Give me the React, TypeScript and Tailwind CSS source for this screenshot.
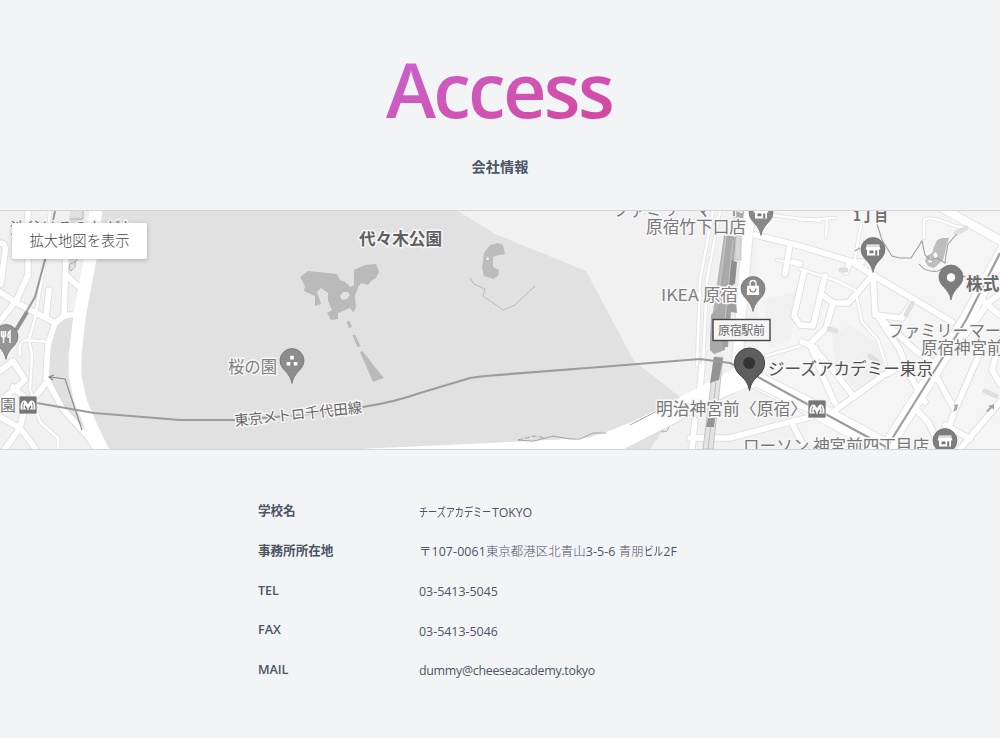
import type { ReactNode } from "react";

type Pt = { x: number; y: number };

const minorRoads = [
  "M0 243 Q6 243 5 252 L1 284",
  "M28 211 L28 275 L17 299",
  "M0 292 L15 302 L55 323 L64 316 L80 313",
  "M0 321 L15 302",
  "M49 290 L46 317",
  "M66 255 L64 316",
  "M66 275 L80 288",
  "M55 323 L48 345 L46 378 L62 408 L88 437 L96 449",
  "M46 383 L24 411 L20 428 L36 449",
  "M0 371 L13 361 L25 380 L0 402",
  "M13 387 L30 402",
  "M0 417 L20 428 L5 449",
  "M755 235 L800 246 L850 261 L873 275 L952 322",
  "M790 244 L785 274",
  "M793 262 L800 264",
  "M804 272 L794 316 L800 325 L813 326 L825 276",
  "M873 275 L848 303 L833 303 L824 296",
  "M862 262 L850 262 L846 272",
  "M873 275 L875 312 L900 350 L908 372 L925 402",
  "M875 315 L902 318 L912 302",
  "M833 303 L826 328 L810 344 L832 369 L854 397",
  "M810 344 L823 377 L835 403",
  "M802 342 L815 348",
  "M834 411 L884 375 L893 371",
  "M880 318 L915 350 L936 365",
  "M914 407 L928 422 L937 440 L947 449",
  "M933 370 L947 396 L955 410",
  "M982 348 L955 410 L948 430",
  "M945 425 L970 439",
  "M1000 402 L960 449",
  "M984 302 L1000 315",
  "M965 335 L989 302 L1000 294",
  "M1000 340 L992 370 L1000 384",
  "M690 438 L730 438 L790 422 L815 416",
  "M792 423 L805 449",
  "M702 365 L699 400",
  "M695 420 L692 449",
];

const thinRoads = [
  "M50 211 L45 260 L35 318 L29 340 L32 355 L30 390",
  "M20 355 Q18 340 27 340 L48 342",
  "M31 392 L40 422 L58 438 L58 449",
  "M713 211 L700 280 L697 365",
  "M720 211 L707 280 L703 365",
  "M800 269 L835 280 L855 290 L862 322 L878 340 L886 365",
  "M800 220 L835 218",
  "M827 218 L826 237",
  "M861 224 L855 258",
  "M924 238 L924 220 Q930 215 955 226 L966 228",
  "M770 215 L820 221",
  "M777 260 L798 265",
  "M766 356 L800 346",
];

function Poi({ x, y, children, fill = "#7d7d7d" }: Pt & { children?: ReactNode; fill?: string }) {
  return (
    <g transform={`translate(${x} ${y})`}>
      <path
        d="M0 22.5 C-1.5 15 -5 12 -9 7.5 A12 12 0 1 1 9 7.5 C5 12 1.5 15 0 22.5Z"
        fill={fill}
        stroke="#6c6c6c"
        strokeWidth=".7"
      />
      {children}
    </g>
  );
}

function Store() {
  return (
    <g>
      <path d="M-6.5 -5.5h13v1.2h-13zM-6.5 -3.7h13l1 3.2h-15z" fill="#fff" />
      <path d="M-6 -1h12v6.5h-12z" fill="#fff" />
      <path d="M-3.5 .5h4v2.7h-4zM2.2 .5h2v5h-2z" fill="#777" />
    </g>
  );
}

function Metro({ x, y }: Pt) {
  return (
    <g transform={`translate(${x} ${y})`}>
      <rect x="-9" y="-9" width="18" height="18" rx="1.5" fill="#777" stroke="#eee" strokeWidth=".8" />
      <path
        d="M-7.3 4.6C-8 0 -6.5 -4.6 -3.8 -4.6C-2 -4.6 -.8 -2.600 0 -.8C.8 -2.600 2 -4.600 3.800 -4.600C6.500 -4.600 8 0 7.300 4.600H2.200V3.500C3.600 2.500 3.600 1.500 2.600 .3C1.500 2 .8 3.400 0 3.400C-.8 3.400 -1.500 2 -2.600 .3C-3.600 1.500 -3.600 2.500 -2.200 3.500V4.600Z"
        fill="#fff"
      />
      <path d="M-5 3.800Q-5.600 0 -4.300 -2.700M5 3.800Q5.600 0 4.300 -2.700" fill="none" stroke="#777" strokeWidth=".9" />
      <circle cy="4" r="1.1" fill="#e8e8e8" />
    </g>
  );
}

type LabelProps = Pt & { w: number; size?: number; fill?: string; weight?: number; rotate?: number; children: string };

function Label({ x, y, w, size = 16.5, fill = "#777", weight = 400, rotate = 0, children }: LabelProps) {
  return (
    <text
      x={x}
      y={y}
      textLength={w}
      lengthAdjust="spacingAndGlyphs"
      fontSize={size}
      fontWeight={weight}
      fill={fill}
      stroke="#f7f7f7"
      strokeWidth="3"
      strokeLinejoin="round"
      paintOrder="stroke"
      transform={`rotate(${rotate} ${x} ${y})`}
    >
      {children}
    </text>
  );
}

function AccessMap() {
  return (
    <svg viewBox="0 211 1000 238" className="block h-[238px] w-full font-['Noto_Sans_CJK_JP',sans-serif]">
      <rect y="211" width="1000" height="238" fill="#f1f1f1" />
      <path d="M755 211H1000V449H815L760 380Z" fill="#f5f5f5" />
      <path d="M832 334L850 325L876 342L885 370L860 395L835 365ZM764 300L800 290L790 340L770 348Z" fill="#f0f0f0" />
      <path d="M70 211H83L80 255L67 278L64 260ZM54 330Q60 317 75 317L70 370L78 400L88 432L60 402L48 378Z" fill="#e0e0e0" />
      <path d="M97 211H458L495 234L586 271L634 361L684 400L650 449H107L88 405L81 375L84 320Z" fill="#e1e1e1" />

      <g fill="none" strokeLinecap="round" strokeLinejoin="round">
        <g stroke="#dedede" strokeWidth="7.4">
          {minorRoads.map((d) => <path key={d} d={d} />)}
        </g>
        <g stroke="#dedede" strokeWidth="4">
          {thinRoads.map((d) => <path key={d} d={d} />)}
        </g>
        <g stroke="#e3e3e3">
          <path d="M752 378L820 412L890 450" strokeWidth="19" />
          <path d="M750 208L742 300L737 364" strokeWidth="12" />
          <path d="M882 455L935 370L966 320L1005 248" strokeWidth="15" />
          <path d="M942 208L1003 242" strokeWidth="10" />
        </g>
        <g stroke="#fff" strokeWidth="2.6">
          {thinRoads.map((d) => <path key={d} d={d} />)}
        </g>
        <g stroke="#fff" strokeWidth="5.6">
          {minorRoads.map((d) => <path key={d} d={d} />)}
        </g>
        <g stroke="#fff">
          <path d="M96 208L92 250L80 313L75 355L75 375L80 400L91 426L105 455" strokeWidth="12.5" />
          <path d="M752 378L820 412L890 450" strokeWidth="17" />
          <path d="M750 208L742 300L737 364" strokeWidth="10" />
          <path d="M882 455L935 370L966 320L1005 248" strokeWidth="13" />
          <path d="M942 208L1003 242" strokeWidth="8" />
        </g>
        <g stroke="#dfdfdf" strokeWidth="5">
          <path d="M829 329L836 331M870 356L880 364M985 391L996 396M841 270H846M966 228L956 233M912 303L906 315" />
        </g>
      </g>

      <path d="M360 449L510 442L588 438Q635 424 682 396L728 372L745 360L762 376L752 385Q710 402 680 420L625 449Z" fill="#fff" />
      <path d="M625 449L637 443L680 421Q710 403 735 393M755 387L808 413" fill="none" stroke="#dedede" />

      <path d="M300 277L308 271L337 274L340 280L345 282Q349 285 350 287L354 285V270L365 265L376 264L379 272L376 278L372 280L368 285L361 283L358 287L357 291L355 295L356 308L353 312L350 308L338 313V319L331 320L327 313L332 310L328 301V293L321 288L317 292L321 304L315 306V296L304 291L305 286Z" fill="#bababa" />
      <path d="M340 296L343 292L348 292L350 295L347 299L342 300Z" fill="#e1e1e1" />
      <path d="M346.500 322L349.500 321L352 327L349 328ZM352.500 335.500L355 334.500L360.500 346L357.500 347ZM360 352L362.500 351L374 366L384 378L373 382Z" fill="#bababa" />
      <path d="M498 243L503 245L505 254L499 255L493 257L493 267L499 270L498 276L493 279L484 276L482 268L484 253L490 245Z" fill="#bcbcbc" />
      <path d="M486 260L488 256L489 260Z" fill="#eee" />
      <path d="M470 278L474 284L485 289L483 296L503 310L515 305L535 286" fill="none" stroke="#bbb" />
      <path d="M518 440L530 441L534 441L553 436L570 439L580 439L593 433H606M630 425L657 411" fill="none" stroke="#a4a4a4" />
      <path d="M518 440L534 436L546 438" fill="none" stroke="#a4a4a4" strokeDasharray="5 2" />
      <path d="M662 430V432L667 431L669 427M75 262V267L71 271L69 268L70 264L75 262L78 258M70 219H83V211" fill="none" stroke="#b0b0b0" />
      <path d="M82 430L70 394L65 379L50 377M54 375L49 377L53 380" fill="none" stroke="#888" strokeWidth="1.1" />

      <path d="M937 240L942 238H949L947 244L945 253L943 260L934 268L928 266L925 261L927 256L932 253L934 247Z" fill="#bdbdbd" />
      <path d="M933 254L936 252L938 256L935 259ZM928 260L931 258L932 262L929 263Z" fill="#f5f5f5" />
      <path d="M877 224L882 240L892 256L900 258L911 258L922 241L925 255L930 260L937 258L945 263L946 255L948 244L957 234M919 264Q926 273 938 271L945 267L967 278M855 251L860 248" fill="none" stroke="#a0a0a0" strokeWidth="1.1" />

      <g>
        <path d="M733 211L743 211L736 300L720 355L714 355L722 260Z" fill="#ececec" />
        <path d="M724 235L731 237L725 310L714 350L710 348L711 325Z" fill="#b5b5b5" />
        <path d="M727 235L736 237L731 300L725 350L714 354L710 350L711 315L717 308Z" fill="#a9a9a9" />
        <path d="M736 235H741V260H735Z" fill="#d8d8d8" stroke="#bbb" strokeWidth=".6" />
        <path d="M731 260L737 262L735 284L728 287Z" fill="#8e8e8e" />
        <path d="M730 301L736 302L737 313L731 312L728 347H722L726 310Z" fill="#a0a0a0" />
        <path d="M726 237L718 300M733 240L725 320" fill="none" stroke="#c9c9c9" strokeWidth=".9" />
        <path d="M733 211H744L743 218H732Z" fill="#aaa" />
        <path d="M714 357L711 385L703 449H713L720 385L723 357Z" fill="#e4e4e4" stroke="#bdbdbd" strokeWidth=".9" />
        <path d="M716 382L708 449" stroke="#bbb" strokeWidth="1" />
        <path d="M714 357L723 358L719 380L710 383ZM708 418H715L714 427H706Z" fill="#949494" />
      </g>

      <g fill="none" stroke="#919191" strokeWidth="2.2" strokeLinejoin="round">
        <path d="M55 211L45 260L35 297L16 330" stroke="#999" strokeWidth="2" />
        <path d="M27 312L16 330" strokeWidth="4" />
        <path d="M37 403L94 413L180 420L235 420L300 415L363 407Q395 402 420 393L470 378L485 376L600 367L700 359L730 363L749 372L818 410L888 448" stroke="#9c9c9c" strokeWidth="2.2" />
        <path d="M885 450L935 370L966 320L1000 253" stroke="#a0a0a0" />
      </g>
      <g fill="#a5a5a5">
        <path d="M958 404L957 410L953 412L955 406L953 405Z" />
        <path d="M994 404L988 406L990 407L986 411L988 412L992 408L994 410Z" />
      </g>

      <Label x={10} y={234} w={126} size={16}>渋谷はるのおがわ</Label>
      <Label x={359} y={244.5} w={83} size={16.6} weight={700} fill="#606060">代々木公園</Label>
      <Label x={613} y={216} w={131}>ファミリーマート</Label>
      <Label x={646} y={233} w={100}>原宿竹下口店</Label>
      <Label x={661} y={301} w={77} fill="#808080">IKEA 原宿</Label>
      <Label x={228} y={372.5} w={49} fill="#808080">桜の園</Label>
      <Label x={235} y={426} w={128} size={14.5} rotate={-6} fill="#666">東京メトロ千代田線</Label>
      <Label x={0} y={411} w={16} size={16}>園</Label>
      <Label x={656} y={415} w={151} fill="#777">明治神宮前〈原宿〉</Label>
      <Label x={768} y={374.5} w={165} fill="#505050">ジーズアカデミー東京</Label>
      <Label x={853} y={221} w={35} size={14.5} weight={700} fill="#707070">1丁目</Label>
      <Label x={966} y={290} w={50} weight={700} fill="#6b6b6b">株式会</Label>
      <Label x={888} y={337} w={129} fill="#777">ファミリーマート</Label>
      <Label x={921} y={354} w={99} fill="#777">原宿神宮前店</Label>
      <Label x={743} y={452} w={186} fill="#777">ローソン 神宮前四丁目店</Label>

      <Poi x={6} y={337} fill="#959595">
        <path d="M-4.5 -6V-2Q-4.5 0 -2.5 0V6M-.5 -6V-2Q-.5 0 -2.5 0V-6M4 6V-6Q1.5 -4 2 0H4" fill="none" stroke="#fff" strokeWidth="1.5" />
      </Poi>
      <Poi x={292} y={361} fill="#8d8d8d">
        <path d="M-1.8 -5.2h3.6v3.6h-3.6zM-5.3 .9h3.6v3.6h-3.6zM1.8 .9h3.6v3.6h-3.6z" fill="#fff" />
      </Poi>
      <Poi x={753} y={289} fill="#888">
        <path d="M-5.8 -3.2H5.8L6.2 6H-6.2Z" fill="#fff" />
        <path d="M-3 -3V-5.5A3 3 0 0 1 3 -5.5V-3" fill="none" stroke="#fff" strokeWidth="1.3" />
        <path d="M-3 -.5Q-3 3 0 3Q3 3 3 -.5" fill="none" stroke="#777" strokeWidth="1.2" />
      </Poi>
      <Poi x={761} y={213} fill="#888"><Store /></Poi>
      <Poi x={873} y={250}><Store /></Poi>
      <Poi x={951} y={277.5}><circle cy="0" r="4.2" fill="#fff" /></Poi>
      <Poi x={945} y={441}><Store /></Poi>
      <Metro x={28} y={405} />
      <Metro x={817} y={409} />

      <rect x="713" y="319.5" width="57" height="21" fill="#f5f5f5" stroke="#444" strokeWidth="1.4" />
      <text x="718" y="334.5" fontSize="12" textLength="47" fill="#666">原宿駅前</text>

      <path d="M749.5 390.5C747.5 380 742.5 378 737.5 372.5A15.200 15.200 0 1 1 761.500 372.5C756.500 378 751.500 380 749.500 390.500Z" fill="#5e5e5e" stroke="#484848" strokeWidth="1" />
      <circle cx="749.2" cy="363" r="6" fill="#333" />
    </svg>
  );
}

function Kana({ children, className }: { children: string; className: string }) {
  return <span className={`inline-block origin-left ${className}`}>{children}</span>;
}

const rows: { label: string; value: ReactNode }[] = [
  {
    label: "学校名",
    value: <span className="tracking-[-0.01em]"><Kana className="w-[73px] scale-x-[0.74]">チーズアカデミー</Kana>TOKYO</span>,
  },
  {
    label: "事務所所在地",
    value: (
      <span className="tracking-[0.1px]">
        〒107-0061<span className="font-light">東京都港区北青山</span>3-5-6 <span className="font-light">青朋</span>
        <Kana className="w-[19.500px] scale-x-[0.77]">ビル</Kana>2F
      </span>
    ),
  },
  { label: "TEL", value: "03-5413-5045" },
  { label: "FAX", value: "03-5413-5046" },
  { label: "MAIL", value: <span className="tracking-[-0.28px]">dummy@cheeseacademy.tokyo</span> },
];

export default function App() {
  return (
    <main className="flex h-[738px] flex-col items-center overflow-hidden bg-gray-100 font-['Open_Sans','Noto_Sans_CJK_JP',sans-serif] text-gray-600">
      <h1 className="mt-[42px] bg-linear-to-br from-[#c765d6] to-[#d54298] bg-clip-text pr-[2px] text-[75.6px] leading-[94px] font-semibold tracking-[-2.7px] whitespace-nowrap text-transparent">
        Access
      </h1>
      <h2 className="mt-[21px] text-[14.2px] leading-[20px] font-bold">会社情報</h2>
      <section className="relative mt-[33px] h-[240px] w-full overflow-hidden border-y border-[#d1d5db]">
        <AccessMap />
        <button className="absolute top-3 left-3 h-9 w-[135px] rounded-[2px] bg-white pb-[2px] font-['Noto_Sans_CJK_JP',sans-serif] text-[14.3px] font-light whitespace-nowrap text-[#444] shadow-[0_1px_4px_rgba(0,0,0,.25)]">
          拡大地図を表示
        </button>
      </section>
      <dl className="mt-[43px] w-[484px] text-[12.6px]">
        {rows.map((row) => (
          <div key={row.label} className="flex h-[39.7px] items-center">
            <dt className="w-[161px] pb-[2px] text-[12.6px] font-semibold tracking-[-0.05px] whitespace-nowrap">{row.label}</dt>
            <dd className="text-[12.4px] whitespace-nowrap">{row.value}</dd>
          </div>
        ))}
      </dl>
    </main>
  );
}
